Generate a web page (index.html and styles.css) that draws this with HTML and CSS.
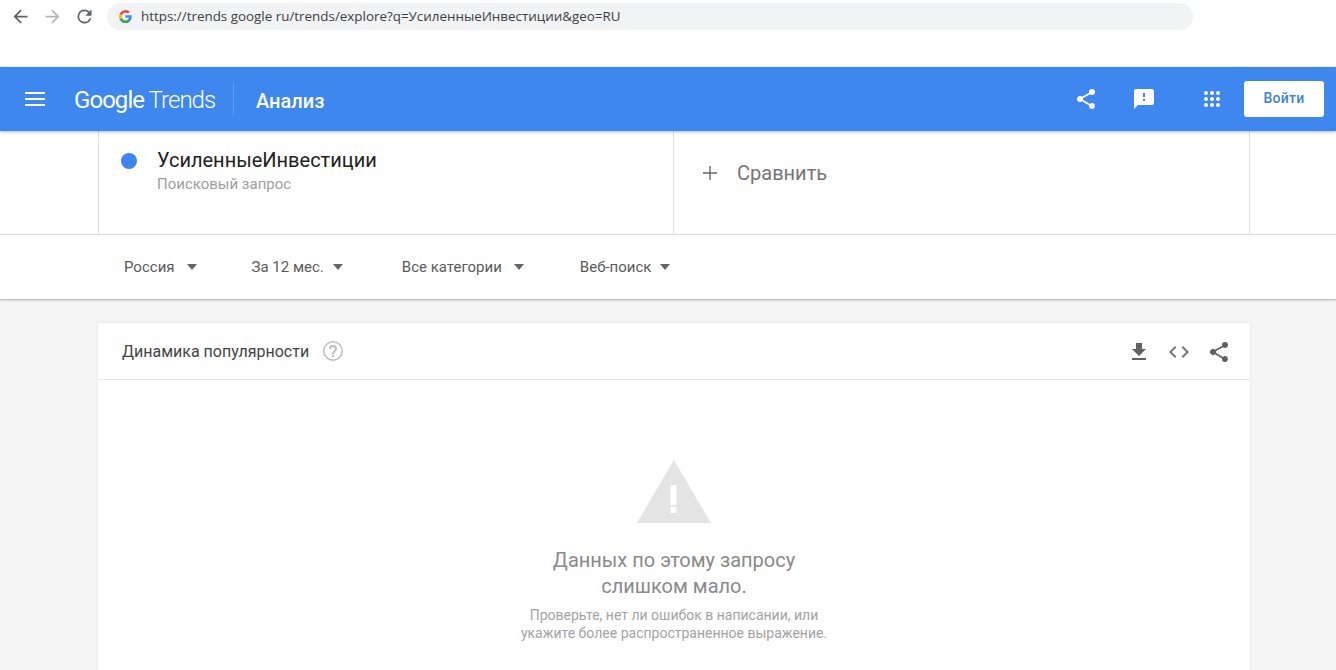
FILE: index.html
```html
<!DOCTYPE html>
<html lang="ru">
  <head>
    <meta charset="UTF-8" />
    <meta name="viewport" content="width=device-width, initial-scale=1.0" />
    <title>Google Trends</title>
    <link rel="stylesheet" href="styles.css">
  </head>
  <body>
    <div class="browser-bar">
      <svg class="nav-icon" viewBox="0 0 24 24"><path fill="#5f6368" d="M20 11H7.8l5.6-5.6L12 4l-8 8 8 8 1.4-1.4L7.8 13H20z"/></svg>
      <svg class="nav-icon" viewBox="0 0 24 24"><path fill="#b4b6b9" d="M4 11h12.2l-5.6-5.6L12 4l8 8-8 8-1.4-1.4 5.6-5.6H4z"/></svg>
      <svg class="nav-icon" viewBox="0 0 24 24"><path fill="#5f6368" d="M17.65 6.35A7.95 7.95 0 0 0 12 4a8 8 0 1 0 7.73 10h-2.08A6 6 0 1 1 12 6c1.66 0 3.14.69 4.22 1.78L13 11h7V4z"/></svg>
      <div class="url-box">
        <svg class="g-icon" viewBox="0 0 18 18">
          <path fill="#4285f4" d="M17.6 9.2c0-.6-.1-1.2-.2-1.8H9v3.4h4.8a4.100 4.100 0 0 1-1.800 2.700v2.200h2.900c1.700-1.600 2.700-3.900 2.700-6.500z"/>
          <path fill="#34a853" d="M9 18c2.400 0 4.500-.8 5.900-2.200L12 13.500c-.8.500-1.800.900-3 .900-2.300 0-4.300-1.600-5-3.700H1v2.300A9 9 0 0 0 9 18z"/>
          <path fill="#fbbc05" d="M4 10.700a5.400 5.400 0 0 1 0-3.400V5H1a9 9 0 0 0 0 8z"/>
          <path fill="#ea4335" d="M9 3.600c1.300 0 2.500.5 3.400 1.300l2.600-2.600A9 9 0 0 0 1 5l3 2.300c.7-2.100 2.700-3.700 5-3.700z"/>
        </svg>
        <span class="url-text">https://trends google ru/trends/explore?q=УсиленныеИнвестиции&amp;geo=RU</span>
      </div>
    </div>

    <header class="app-bar">
      <svg class="menu-icon" viewBox="0 0 20 14"><path fill="#fff" d="M0 0h20v2H0zM0 6h20v2H0zM0 12h20v2H0z"/></svg>
      <div class="logo"><span class="logo-google">Google</span> <span class="logo-trends">Trends</span></div>
      <div class="page-title">Анализ</div>
      <div class="app-actions">
        <svg class="app-icon share-icon" viewBox="0 0 24 24"><path fill="#fff" d="M18 16.100c-.8 0-1.500.3-2 .8l-7.100-4.200c.1-.2.100-.5.100-.7s0-.5-.1-.7L16 7.200c.5.500 1.200.8 2 .8a3 3 0 1 0-3-3c0 .2 0 .5.100.7L8 9.800A3 3 0 1 0 8 14.200l7.100 4.200c-.1.200-.1.400-.1.600a2.900 2.900 0 1 0 3-2.900z"/></svg>
        <svg class="app-icon feedback-icon" viewBox="0 0 24 24"><path fill="#fff" d="M20 2H4c-1.100 0-2 .9-2 2v18l4-4h14c1.100 0 2-.9 2-2V4c0-1.100-.9-2-2-2zm-7 12h-2v-2h2v2zm0-4h-2V6h2v4z"/></svg>
        <svg class="app-icon apps-icon" viewBox="0 0 18 18">
          <g fill="#fff">
            <circle cx="3" cy="3" r="2"/><circle cx="9" cy="3" r="2"/><circle cx="15" cy="3" r="2"/>
            <circle cx="3" cy="9" r="2"/><circle cx="9" cy="9" r="2"/><circle cx="15" cy="9" r="2"/>
            <circle cx="3" cy="15" r="2"/><circle cx="9" cy="15" r="2"/><circle cx="15" cy="15" r="2"/>
          </g>
        </svg>
        <button class="login">Войти</button>
      </div>
    </header>

    <section class="terms">
      <div class="term">
        <span class="term-dot"></span>
        <div>
          <div class="term-name">УсиленныеИнвестиции</div>
          <div class="term-type">Поисковый запрос</div>
        </div>
      </div>
      <div class="compare">
        <svg class="plus-icon" viewBox="0 0 14 14"><path fill="#666" d="M6.300 0h1.400v6.300H14v1.400H7.700V14H6.300V7.700H0V6.300h6.300z"/></svg>
        <span>Сравнить</span>
      </div>
    </section>

    <section class="filters">
      <div class="filter filter-geo">Россия<span class="caret"></span></div>
      <div class="filter filter-time">За 12 мес.<span class="caret"></span></div>
      <div class="filter filter-cat">Все категории<span class="caret"></span></div>
      <div class="filter">Веб-поиск<span class="caret"></span></div>
    </section>

    <main class="content">
      <div class="card">
        <div class="card-head">
          <span class="card-title">Динамика популярности</span>
          <svg class="help-icon" viewBox="0 0 24 24"><path fill="#bdbdbd" d="M11 18h2v-2h-2v2zm1-16a10 10 0 1 0 0 20 10 10 0 0 0 0-20zm0 18.500a8.500 8.500 0 1 1 0-17 8.500 8.500 0 0 1 0 17zM12 6a4 4 0 0 0-4 4h2a2 2 0 1 1 4 0c0 2-3 1.750-3 5h2c0-2.250 3-2.500 3-5a4 4 0 0 0-4-4z"/></svg>
          <div class="card-actions">
            <svg class="card-icon" viewBox="0 0 24 24"><path fill="#616161" d="M19 9h-4V3H9v6H5l7 7 7-7zM5 18v2h14v-2H5z"/></svg>
            <svg class="card-icon" viewBox="0 0 24 24"><path fill="#757575" d="M9.400 16.600L4.800 12l4.600-4.600L8 6l-6 6 6 6zM14.600 16.600l4.600-4.600-4.600-4.600L16 6l6 6-6 6z"/></svg>
            <svg class="card-icon" viewBox="0 0 24 24"><path fill="#616161" d="M18 16.100c-.8 0-1.500.3-2 .8l-7.100-4.200c.1-.2.100-.5.100-.7s0-.5-.1-.7L16 7.200c.5.500 1.200.8 2 .8a3 3 0 1 0-3-3c0 .2 0 .5.100.7L8 9.800A3 3 0 1 0 8 14.200l7.100 4.200c-.1.200-.1.400-.1.600a2.900 2.900 0 1 0 3-2.900z"/></svg>
          </div>
        </div>
        <div class="card-body">
          <svg class="warn-icon" viewBox="0 0 74 63"><path fill="#e4e4e4" fill-rule="evenodd" d="M37 0l37 63H0zM33.500 25v20h6V25zM33.500 47v6h6v-6z"/></svg>
          <div class="empty-title">Данных по этому запросу<br>слишком мало.</div>
          <div class="empty-text">Проверьте, нет ли ошибок в написании, или<br>укажите более распространенное выражение.</div>
        </div>
      </div>
    </main>
  </body>
</html>
```

FILE: styles.css
```css
html,
body {
  height: 670px;
  overflow: hidden;
}

body {
  font-family: Roboto, Arial, sans-serif;
  background-color: #f5f5f5;
  margin: 0;
  padding: 0;
  color: #333;
}

.browser-bar {
  height: 67px;
  background-color: #fff;
  display: flex;
  align-items: flex-start;
  padding: 3px 0 0 10px;
  box-sizing: border-box;
}

.nav-icon {
  width: 21px;
  height: 21px;
  margin-right: 11px;
  margin-top: 3px;
}

.url-box {
  width: 1086px;
  height: 27px;
  margin-left: 1px;
  border-radius: 14px;
  background-color: #f1f3f4;
  display: flex;
  align-items: center;
  padding-left: 12px;
  box-sizing: border-box;
}

.g-icon {
  width: 13px;
  height: 13px;
  margin-right: 9px;
}

.url-text {
  font-family: "Open Sans", Arial, sans-serif;
  font-size: 13.4px;
  color: #3c4043;
  margin-bottom: 2px;
}

.app-bar {
  height: 64px;
  background-color: #3d87ef;
  display: flex;
  align-items: center;
  padding-left: 25px;
  box-shadow: 0 1px 3px rgba(0, 0, 0, 0.3);
  position: relative;
  color: #fff;
}

.menu-icon {
  width: 20px;
  height: 14px;
  margin-right: 29px;
}

.logo {
  width: 159px;
  height: 34px;
  line-height: 36px;
  border-right: 1px solid #5a9af2;
  font-size: 24px;
  letter-spacing: -0.95px;
  white-space: nowrap;
  font-weight: 300;
}

.logo-google {
  font-weight: 400;
}

.page-title {
  margin: 3px 0 0 22px;
  font-size: 20px;
  font-weight: 500;
}

.app-actions {
  margin-left: auto;
  display: flex;
  align-items: center;
}

.app-icon {
  width: 24px;
  height: 24px;
}

.share-icon {
  margin-right: 34px;
}

.feedback-icon {
  margin-right: 47px;
}

.apps-icon {
  width: 18px;
  height: 18px;
  margin-right: 23px;
}

.login {
  width: 80px;
  height: 36px;
  margin-right: 12px;
  padding-bottom: 3px;
  border: none;
  border-radius: 3px;
  background-color: #fff;
  color: #3d7fd9;
  font-family: Roboto, Arial, sans-serif;
  font-size: 14px;
  font-weight: 500;
  letter-spacing: 0.3px;
}

.terms {
  height: 103px;
  background-color: #fff;
  display: flex;
  padding: 0 86px 0 98px;
  border-bottom: 1px solid #dcdcdc;
}

.term {
  width: 575px;
  box-sizing: border-box;
  border-left: 1px solid #e0e0e0;
  display: flex;
  align-items: flex-start;
  padding: 18px 0 0 22px;
}

.term-dot {
  width: 16px;
  height: 16px;
  border-radius: 50%;
  background-color: #3d84ee;
  margin: 4px 20px 0 0;
}

.term-name {
  font-size: 20px;
  line-height: 23px;
  color: #222;
}

.term-type {
  font-size: 15px;
  line-height: 16px;
  margin-top: 4px;
  color: #9e9e9e;
}

.compare {
  flex: 1;
  border-left: 1px solid #e0e0e0;
  border-right: 1px solid #e0e0e0;
  display: flex;
  align-items: center;
  padding: 0 0 20px 29px;
  font-size: 20px;
  color: #757575;
}

.plus-icon {
  width: 14px;
  height: 14px;
  margin-right: 20px;
}

.filters {
  height: 64px;
  background-color: #fff;
  display: flex;
  align-items: center;
  padding-left: 124px;
  font-size: 15px;
  color: #5a5a5a;
  border-bottom: 1px solid #bdbdbd;
  box-shadow: 0 1px 2px rgba(0, 0, 0, 0.12);
}

.filter {
  display: flex;
  align-items: center;
}

.filter-geo {
  margin-right: 55px;
}

.filter-time {
  margin-right: 59px;
}

.filter-cat {
  margin-right: 56px;
}

.caret {
  width: 0;
  height: 0;
  margin-left: 9px;
  border-left: 5.500px solid transparent;
  border-right: 5.500px solid transparent;
  border-top: 6px solid #666;
}

.filter-geo .caret,
.filter-cat .caret {
  margin-left: 12px;
}

.content {
  padding: 23px 86px 0 98px;
}

.card {
  background-color: #fff;
  box-shadow: 0 0 3px rgba(0, 0, 0, 0.08);
  height: 360px;
}

.card-head {
  height: 57px;
  box-sizing: border-box;
  border-bottom: 1px solid #e6e6e6;
  display: flex;
  align-items: center;
  padding: 0 19px 0 24px;
}

.card-title {
  font-size: 16px;
  color: #444;
}

.help-icon {
  width: 24px;
  height: 24px;
  margin-left: 12px;
}

.card-actions {
  margin: 1px 0 0 auto;
  display: flex;
  gap: 16px;
}

.card-icon {
  width: 24px;
  height: 24px;
}

.card-body {
  display: flex;
  flex-direction: column;
  align-items: center;
  padding-top: 80px;
  text-align: center;
}

.warn-icon {
  width: 74px;
  height: 63px;
}

.empty-title {
  margin-top: 24px;
  font-size: 20px;
  line-height: 26px;
  color: #8a8a8a;
}

.empty-text {
  margin-top: 7px;
  font-size: 14px;
  line-height: 18px;
  color: #a3a3a3;
}
```
